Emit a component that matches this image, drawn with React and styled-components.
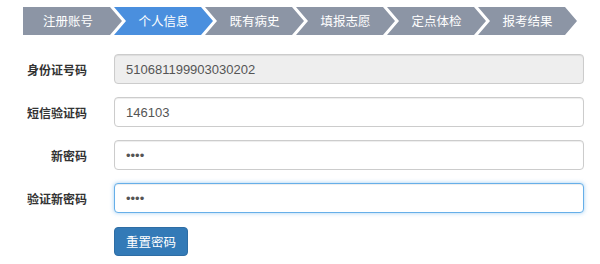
import React from "react";
import styled, { createGlobalStyle, css } from "styled-components";

const Global = createGlobalStyle`
  html, body { margin: 0; padding: 0; background: #fff; }
  body { font-family: "Liberation Sans", "Noto Sans CJK SC", sans-serif; color: #333; }
`;

const Page = styled.div`
  width: 600px;
  height: 264px;
  box-sizing: border-box;
  padding: 7px 0 0 23px;
`;

const Steps = styled.ol`
  display: flex;
  list-style: none;
  margin: 0;
  padding: 0;
  height: 28px;
`;

const Step = styled.li`
  width: 99px;
  height: 28px;
  box-sizing: border-box;
  margin-left: ${(p) => (p.$first ? "0" : "-8px")};
  padding: 0 12px 0 ${(p) => (p.$first ? "3px" : "12px")};
  background: ${(p) => (p.$active ? "#4a8fde" : "#8c95a5")};
  color: #fff;
  font-family: "Noto Sans CJK SC", sans-serif;
  font-size: 12.5px;
  line-height: 28px;
  text-align: center;
  clip-path: ${(p) =>
    p.$first
      ? "polygon(0 0, calc(100% - 12px) 0, 100% 50%, calc(100% - 12px) 100%, 0 100%)"
      : "polygon(0 0, calc(100% - 12px) 0, 100% 50%, calc(100% - 12px) 100%, 0 100%, 12px 50%)"};
`;

const Form = styled.form`
  margin: 19px 0 0 -23px;
  display: flex;
  flex-direction: column;
  gap: 13px;
`;

const Row = styled.div`
  display: flex;
  align-items: center;
  gap: 27px;
`;

const Label = styled.label`
  width: 87px;
  text-align: right;
  font-family: "Noto Sans CJK SC", sans-serif;
  font-weight: bold;
  font-size: 12px;
  color: #333;
`;

const Input = styled.input`
  width: 470px;
  height: 30px;
  box-sizing: border-box;
  padding: 5px 11px;
  font-family: "Liberation Sans", "Noto Sans CJK SC", sans-serif;
  font-size: 13px;
  color: #555;
  background: ${(p) => (p.readOnly ? "#eee" : "#fff")};
  border: 1px solid #ccc;
  border-radius: 4px;
  outline: none;
  box-shadow: inset 0 1px 1px rgba(0, 0, 0, 0.075);
  ${(p) =>
    p.$focus &&
    css`
      border-color: #66afe9;
      box-shadow: inset 0 1px 1px rgba(0, 0, 0, 0.075), 0 0 4px rgba(102, 175, 233, 0.6);
    `}
`;

const Actions = styled.div`
  padding-left: 114px;
  margin-top: 1px;
`;

const Button = styled.button`
  height: 29px;
  padding: 0 11px;
  font-family: "Noto Sans CJK SC", sans-serif;
  font-size: 12.5px;
  color: #fff;
  background: #337ab7;
  border: 1px solid #2e6da4;
  border-radius: 4px;
`;

const steps = ["注册账号", "个人信息", "既有病史", "填报志愿", "定点体检", "报考结果"];

export default function App() {
  return (
    <Page>
      <Global />
      <Steps>
        {steps.map((s, i) => (
          <Step key={s} $first={i === 0} $active={i === 1}>
            {s}
          </Step>
        ))}
      </Steps>
      <Form onSubmit={(e) => e.preventDefault()}>
        <Row>
          <Label>身份证号码</Label>
          <Input readOnly value="510681199903030202" />
        </Row>
        <Row>
          <Label>短信验证码</Label>
          <Input defaultValue="146103" />
        </Row>
        <Row>
          <Label>新密码</Label>
          <Input type="password" defaultValue="1234" />
        </Row>
        <Row>
          <Label>验证新密码</Label>
          <Input type="password" defaultValue="1234" $focus />
        </Row>
        <Actions>
          <Button type="button">重置密码</Button>
        </Actions>
      </Form>
    </Page>
  );
}
